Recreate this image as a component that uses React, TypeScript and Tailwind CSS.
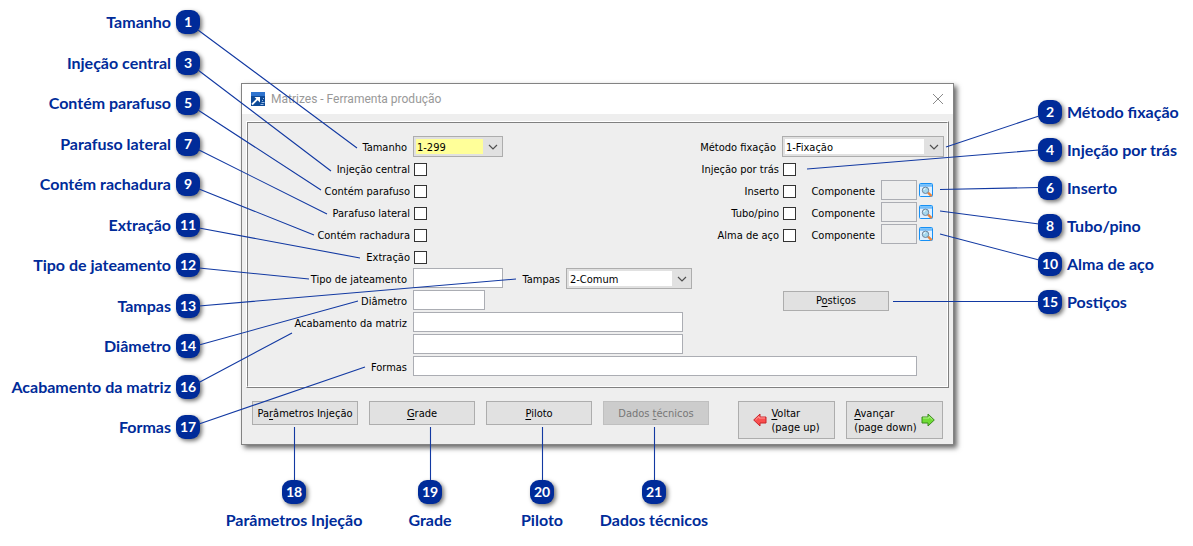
import { ReactNode } from "react";

const LEFT_CALLOUTS = [
    { id: 1, text: "Tamanho" },
    { id: 3, text: "Injeção central" },
    { id: 5, text: "Contém parafuso" },
    { id: 7, text: "Parafuso lateral" },
    { id: 9, text: "Contém rachadura" },
    { id: 11, text: "Extração" },
    { id: 12, text: "Tipo de jateamento" },
    { id: 13, text: "Tampas" },
    { id: 14, text: "Diâmetro" },
    { id: 16, text: "Acabamento da matriz" },
    { id: 17, text: "Formas" },
];

const RIGHT_CALLOUTS = [
    { id: 2, text: "Método fixação" },
    { id: 4, text: "Injeção por trás" },
    { id: 6, text: "Inserto" },
    { id: 8, text: "Tubo/pino" },
    { id: 10, text: "Alma de aço" },
    { id: 15, text: "Postiços" },
];

const BOTTOM_CALLOUTS = [
    { id: 18, text: "Parâmetros Injeção" },
    { id: 19, text: "Grade" },
    { id: 20, text: "Piloto" },
    { id: 21, text: "Dados técnicos" },
];

function Badge({ id }: { id: number }) {
    return (
        <span className="flex size-6 shrink-0 items-center justify-center rounded-[9px] bg-[#002b99] text-sm font-bold text-white shadow-[2px_2px_4px_rgba(0,0,0,0.55)]">
            {id}
        </span>
    );
}

function ComboBox({ id, value, className, fill }: { id: string; value: string; className: string; fill: string }) {
    return (
        <div className={`relative flex h-[21px] border border-[#adadad] bg-[#e1e1e1] py-[2px] pl-[2px] ${className}`}>
            <select id={id} defaultValue={value} className={`min-w-0 flex-1 appearance-none pt-px pl-px leading-[15px] outline-none ${fill}`}>
                <option>{value}</option>
            </select>
            <svg viewBox="0 0 19 15" className="pointer-events-none h-[15px] w-[19px]" fill="none" stroke="#505050" strokeWidth="1.2">
                <path d="M6 6l4 4 4-4" />
            </svg>
        </div>
    );
}

function CheckRow({ id, label }: { id: string; label: string }) {
    return (
        <div className="flex h-[22px] items-center gap-1 pt-px">
            <label htmlFor={id} className="w-[162px] pt-[2px] text-right">{label}</label>
            <input id={id} type="checkbox" className="size-[13px] appearance-none border border-[#333] bg-white" />
        </div>
    );
}

function TextRow({ id, label, width }: { id: string; label: string; width: string }) {
    return (
        <div className="flex h-[22px] gap-[6px]">
            <label htmlFor={id} className="w-[159px] text-right leading-6">{label}</label>
            <input id={id} type="text" className={`h-5 border border-[#abadb3] bg-white px-1 ${width}`} />
        </div>
    );
}

function ComponentRow({ id, label }: { id: string; label: string }) {
    return (
        <div className="flex h-[22px] pr-[11px]">
            <label htmlFor={id} className="flex-1 text-right leading-6">{label}</label>
            <input id={id} type="checkbox" className="mt-[5px] ml-1 size-[13px] appearance-none border border-[#333] bg-white" />
            <label htmlFor={`${id}-comp`} className="w-[79px] text-right leading-6">Componente</label>
            <input id={`${id}-comp`} type="text" disabled className="ml-[6px] h-5 w-9 border border-[#abadb3] bg-[#eee]" />
            <button type="button" aria-label={`Pesquisar ${label}`} className="ml-[2px] h-5 w-[14px]">
                <SearchIcon />
            </button>
        </div>
    );
}

function SearchIcon() {
    return (
        <svg viewBox="0 0 14 14" className="size-[14px]">
            <rect x="0.5" y="0.5" width="13" height="13" rx="1" fill="#dff0ff" stroke="#1690f5" />
            <path d="M1 1h12v1.500H1z" fill="#7cc4fb" />
            <path d="M1 3h12" stroke="#1690f5" strokeWidth="0.8" />
            <path d="M9 9.500l3.600 3.600" stroke="#e8843c" strokeWidth="2.4" />
            <circle cx="6.5" cy="7.3" r="3.2" fill="#a5d8ee" stroke="#71839a" />
            <path d="M4.800 7a2 2 0 0 1 1.700-1.700" fill="none" stroke="#fff" />
        </svg>
    );
}

function PushButton({ children, disabled, className }: { children: ReactNode; disabled?: boolean; className: string }) {
    return (
        <button
            type="button"
            disabled={disabled}
            className={`border border-[#adadad] bg-[#e1e1e1] disabled:border-[#bfbfbf] disabled:bg-[#ccc] disabled:text-[#777] ${className}`}
        >
            {children}
        </button>
    );
}

function Key({ children }: { children: ReactNode }) {
    return <span className="underline underline-offset-2">{children}</span>;
}

function ArrowIcon({ kind }: { kind: "back" | "next" }) {
    if (kind === "back") {
        return (
            <svg viewBox="0 0 14 14" className="size-[14px]">
                <path d="M.7 7L7 1v3h6v6H7v3z" fill="#f94f4f" stroke="#c9262b" />
                <path d="M2.500 6.800L6 3.400V5h6" fill="none" stroke="#ff9c9c" />
            </svg>
        );
    }
    return (
        <svg viewBox="0 0 14 14" className="size-[14px]">
            <path d="M13.300 7L7 1v3H1v6h6v3z" fill="#6fdc35" stroke="#3b8b1c" />
            <path d="M2 5h6V3.400l3.500 3.300" fill="none" stroke="#b3f18c" />
        </svg>
    );
}

function ToolWindow() {
    return (
        <main className="mt-[83px] flex-1 border border-[#838383] bg-[#eee] font-['DejaVu_Sans_Condensed','Noto_Sans',sans-serif] text-[11px] text-black shadow-[3px_3px_5px_rgba(0,0,0,0.6)]">
            <header className="flex h-[30px] items-center bg-white pr-[9px] pl-[9px]">
                <svg viewBox="0 0 14 14" className="size-[14px]">
                    <path d="M0 0h14v14H0z" fill="#0e4a98" />
                    <path d="M0 0h14v4H0z" fill="#2f74cf" />
                    <path d="M1 12.500L7 6.500" stroke="#fff" strokeWidth="1.8" />
                    <path d="M3.500 5H9v5.500z" fill="#fff" />
                    <path d="M9.500 12.500h3M10.500 10.500h3M11 8.500h1M12 6.500h1" stroke="#9bbce6" />
                </svg>
                <h1 className="ml-[6px] flex-1 font-['Roboto',sans-serif] text-xs text-[#999]">Matrizes - Ferramenta produção</h1>
                <button type="button" aria-label="Fechar" className="size-3">
                    <svg viewBox="0 0 12 12" className="size-3" stroke="#8a8a8a">
                        <path d="M1 1l10 10M11 1L1 11" />
                    </svg>
                </button>
            </header>

            <div className="mx-1 mt-[7px] border border-t-white border-r-[#808080] border-b-[#808080] border-l-white">
                <div className="border border-t-[#808080] border-r-white border-b-white border-l-[#808080] pt-[13px] pb-[10px]">
                    <div className="flex justify-between">
                        <div>
                            <div className="flex h-[22px] gap-[6px]">
                                <label htmlFor="tamanho" className="w-[159px] text-right leading-6">Tamanho</label>
                                <ComboBox id="tamanho" value="1-299" className="w-[90px]" fill="bg-[#ffff99]" />
                            </div>
                            <CheckRow id="central" label="Injeção central" />
                            <CheckRow id="parafuso" label="Contém parafuso" />
                            <CheckRow id="lateral" label="Parafuso lateral" />
                            <CheckRow id="rachadura" label="Contém rachadura" />
                            <CheckRow id="extracao" label="Extração" />
                            <div className="flex">
                                <TextRow id="jateamento" label="Tipo de jateamento" width="w-[90px]" />
                                <label htmlFor="tampas" className="mr-[6px] h-[22px] w-[57px] text-right leading-6">Tampas</label>
                                <ComboBox id="tampas" value="2-Comum" className="w-[126px]" fill="bg-white" />
                            </div>
                            <TextRow id="diametro" label="Diâmetro" width="w-[72px]" />
                            <TextRow id="acabamento" label="Acabamento da matriz" width="w-[270px]" />
                            <div className="flex h-[22px] pl-[165px]">
                                <input type="text" aria-label="Acabamento da matriz, linha 2" className="h-5 w-[270px] border border-[#abadb3] bg-white px-1" />
                            </div>
                        </div>

                        <div className="flex w-[250px] flex-col pr-[3px]">
                            <div className="flex h-[22px] gap-[6px]">
                                <label htmlFor="metodo" className="flex-1 text-right leading-6">Método fixação</label>
                                <ComboBox id="metodo" value="1-Fixação" className="w-[162px]" fill="bg-white" />
                            </div>
                            <div className="flex h-[22px] items-center gap-1 pt-px">
                                <label htmlFor="tras" className="flex-1 pt-[2px] text-right">Injeção por trás</label>
                                <input id="tras" type="checkbox" className="mr-[148px] size-[13px] appearance-none border border-[#333] bg-white" />
                            </div>
                            <ComponentRow id="inserto" label="Inserto" />
                            <ComponentRow id="tubo" label="Tubo/pino" />
                            <ComponentRow id="alma" label="Alma de aço" />
                            <PushButton className="mt-[45px] mr-[55px] h-5 w-[106px] self-end">
                                P<Key>o</Key>stiços
                            </PushButton>
                        </div>
                    </div>
                    <div className="flex h-5 gap-[6px] pr-[30px]">
                        <label htmlFor="formas" className="w-[159px] text-right leading-6">Formas</label>
                        <input id="formas" type="text" className="h-5 min-w-0 flex-1 border border-[#abadb3] bg-white px-1" />
                    </div>
                </div>
            </div>

            <footer className="flex items-start gap-[11px] px-[10px] pt-[13px] pb-[5px]">
                <PushButton className="h-6 w-[106px] pt-[2px]">Pa<Key>r</Key>âmetros Injeção</PushButton>
                <PushButton className="h-6 w-[106px] pt-[2px]"><Key>G</Key>rade</PushButton>
                <PushButton className="h-6 w-[106px] pt-[2px]"><Key>P</Key>iloto</PushButton>
                <PushButton className="h-6 w-[106px] pt-[2px]" disabled>Dados <Key>t</Key>écnicos</PushButton>
                <PushButton className="ml-auto flex h-[38px] w-[97px] items-center justify-center gap-1 text-left leading-[14px]">
                    <ArrowIcon kind="back" />
                    <span className="pt-[2px]"><Key>V</Key>oltar<br />(page up)</span>
                </PushButton>
                <PushButton className="flex h-[38px] w-[97px] items-center justify-center gap-1 text-left leading-[14px]">
                    <span className="pt-[2px]"><Key>A</Key>vançar<br />(page down)</span>
                    <ArrowIcon kind="next" />
                </PushButton>
            </footer>
        </main>
    );
}

export default function App() {
    return (
        <div className="relative min-h-screen min-w-[1100px] bg-white font-['Lato',sans-serif]">
            <div className="flex">
                <aside className="flex w-[241px] shrink-0 flex-col justify-between pt-[10px] pr-[41px] pb-[6px]">
                    {LEFT_CALLOUTS.map((c) => (
                        <div key={c.id} className="flex items-center justify-end gap-[5px] text-base leading-6 font-bold whitespace-nowrap text-[#002b99]">
                            {c.text}
                            <Badge id={c.id} />
                        </div>
                    ))}
                </aside>
                <ToolWindow />
                <aside className="flex w-[239px] shrink-0 flex-col gap-[14px] pt-[100px] pl-[84px]">
                    {RIGHT_CALLOUTS.map((c) => (
                        <div key={c.id} className="flex items-center gap-[5px] text-base leading-6 font-bold whitespace-nowrap text-[#002b99]">
                            <Badge id={c.id} />
                            {c.text}
                        </div>
                    ))}
                </aside>
            </div>

            <div className="grid grid-cols-[160px_112px_112px_112px] pt-[35px] pl-[214px]">
                {BOTTOM_CALLOUTS.map((c) => (
                    <div key={c.id} className="flex flex-col items-center gap-1 text-base leading-6 font-bold whitespace-nowrap text-[#002b99]">
                        <Badge id={c.id} />
                        {c.text}
                    </div>
                ))}
            </div>

            {/* leader lines, one drawing pinned to each side of the page */}
            <svg className="pointer-events-none absolute top-0 left-0" width="720" height="500" stroke="#1239a2" strokeWidth="1.1">
                <path d="M198 30L357 148M198 70L331 171M198 110L321 190M199 150L327 214M199 189L314 235M199 228L360 258M199 268L309 279M199 306L516 279M199 345L358 301M198 383L292 333M199 424L365 367" />
                <path d="M294.5 427V480M430.5 427V480M542.5 427V480M654.5 427V480" />
            </svg>
            <svg className="pointer-events-none absolute top-0 right-0" width="393" height="400" stroke="#1239a2" strokeWidth="1.1">
                <path d="M146 147L239 116M7 169L239 150M140 189.500L239 187.500M140 211L239 224M140 234L239 260M93 301.500H239" />
            </svg>
        </div>
    );
}
